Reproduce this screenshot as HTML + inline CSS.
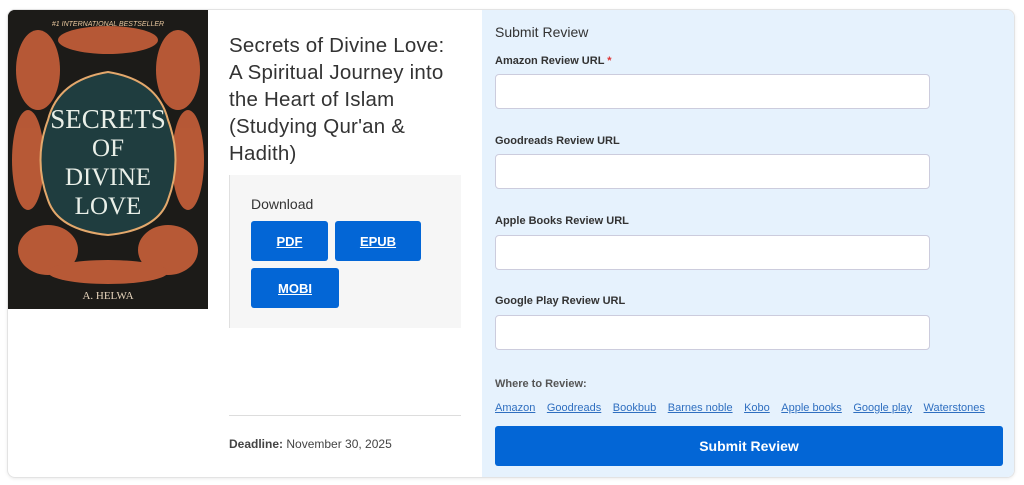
<!DOCTYPE html>
<html><head><style>
*{box-sizing:border-box;margin:0;padding:0}
body{width:1024px;height:485px;background:#fff;font-family:"Liberation Sans",sans-serif;position:relative;overflow:hidden}
.card{position:absolute;left:7px;top:9px;width:1008px;height:469px;border:1px solid #e3e3e3;border-radius:8px;overflow:hidden;box-shadow:0 1px 3px rgba(0,0,0,.08)}
.right{position:absolute;left:474px;top:0;width:534px;height:469px;background:#e6f2fd}
.abs{position:absolute}
.cover{left:0;top:0;width:200px;height:299px;background:#1d1a17;overflow:hidden}
.t{left:221px;top:22px;font-size:20.5px;line-height:27px;color:#333;width:260px;white-space:nowrap;letter-spacing:.2px}
.dl{left:221px;top:165px;width:232px;height:153px;background:#f6f6f6;border-left:1px solid #e0e0e0}
.btn{position:absolute;background:#0366d6;color:#fff;font-weight:bold;font-size:13px;text-decoration:underline;display:flex;align-items:center;justify-content:center;border-radius:3px}
.lbl{position:absolute;left:13px;font-size:11px;font-weight:bold;color:#333}
.inp{position:absolute;left:13px;width:435px;height:35px;background:#fff;border:1px solid #ccd;border-radius:4px}
.links a{color:#2f6fc0;text-decoration:underline;font-size:11px;margin-right:11.5px}
</style></head><body>
<div class="card">
<div class="abs cover">
<svg width="200" height="299" viewBox="0 0 200 299">
<rect width="200" height="299" fill="#1c1b18"/>
<g fill="#c8603a" opacity=".9">
<ellipse cx="30" cy="60" rx="22" ry="40"/><ellipse cx="170" cy="60" rx="22" ry="40"/>
<ellipse cx="20" cy="150" rx="16" ry="50"/><ellipse cx="180" cy="150" rx="16" ry="50"/>
<ellipse cx="40" cy="240" rx="30" ry="25"/><ellipse cx="160" cy="240" rx="30" ry="25"/>
<ellipse cx="100" cy="30" rx="50" ry="14"/><ellipse cx="100" cy="262" rx="60" ry="12"/>
</g>
<path d="M100 62 Q150 70 160 110 Q175 150 160 190 Q150 220 100 225 Q50 220 40 190 Q25 150 40 110 Q50 70 100 62Z" fill="#1f3d3f" stroke="#e3a86c" stroke-width="2"/>
<text x="100" y="16" font-size="7" fill="#e8c79e" text-anchor="middle" font-style="italic">#1 INTERNATIONAL BESTSELLER</text>
<text x="100" y="118" font-size="27" fill="#e9efe8" text-anchor="middle" font-family="Liberation Serif">SECRETS</text>
<text x="100" y="146" font-size="25" fill="#e9efe8" text-anchor="middle" font-family="Liberation Serif">OF</text>
<text x="100" y="175" font-size="25" fill="#e9efe8" text-anchor="middle" font-family="Liberation Serif">DIVINE</text>
<text x="100" y="204" font-size="25" fill="#e9efe8" text-anchor="middle" font-family="Liberation Serif">LOVE</text>
<text x="100" y="289" font-size="11" fill="#e8d6bd" text-anchor="middle" font-family="Liberation Serif">A. HELWA</text>
</svg>
</div>
<div class="abs t">Secrets of Divine Love:<br>A Spiritual Journey into<br>the Heart of Islam<br>(Studying Qur'an &amp;<br>Hadith)</div>
<div class="abs dl">
<div class="abs" style="left:21px;top:21px;font-size:14px;color:#333">Download</div>
<div class="btn" style="left:21px;top:46px;width:77px;height:40px">PDF</div>
<div class="btn" style="left:105px;top:46px;width:86px;height:40px">EPUB</div>
<div class="btn" style="left:21px;top:93px;width:88px;height:40px">MOBI</div>
</div>
<div class="abs" style="left:221px;top:405px;width:232px;height:1px;background:#ddd"></div>
<div class="abs" style="left:221px;top:427px;font-size:12px;color:#444"><b>Deadline:</b> November 30, 2025</div>
<div class="right">
<div class="abs" style="left:13px;top:14px;font-size:14px;color:#333">Submit Review</div>
<div class="lbl" style="top:45px">Amazon Review URL <span style="color:#d33">*</span></div>
<div class="inp" style="top:64px"></div>
<div class="lbl" style="top:125px">Goodreads Review URL</div>
<div class="inp" style="top:144px"></div>
<div class="lbl" style="top:205px">Apple Books Review URL</div>
<div class="inp" style="top:225px"></div>
<div class="lbl" style="top:285px">Google Play Review URL</div>
<div class="inp" style="top:305px"></div>
<div class="lbl" style="top:368px;color:#555">Where to Review:</div>
<div class="abs links" style="left:13px;top:388px;white-space:nowrap"><a>Amazon</a><a>Goodreads</a><a>Bookbub</a><a>Barnes noble</a><a>Kobo</a><a>Apple books</a><a>Google play</a><a>Waterstones</a></div>
<div class="btn" style="left:13px;top:416px;width:508px;height:40px;text-decoration:none;font-size:14px">Submit Review</div>
</div>
</div>
</body></html>
